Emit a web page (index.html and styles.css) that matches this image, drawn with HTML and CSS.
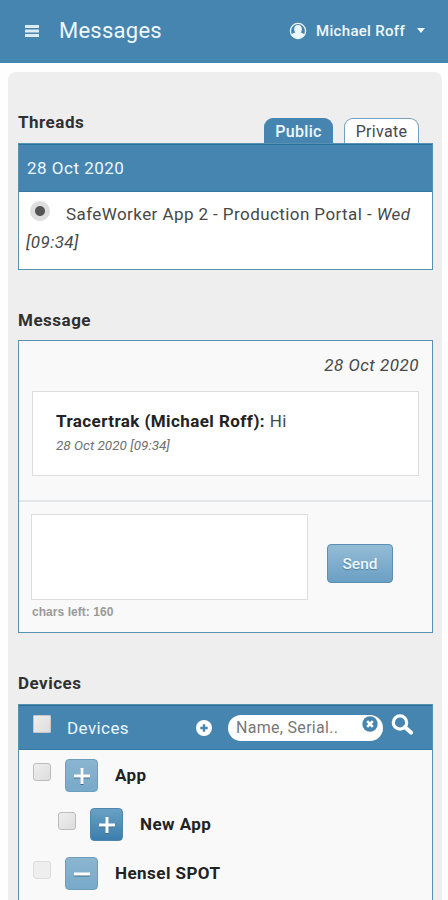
FILE: index.html
```html
<!DOCTYPE html>
<html lang="en">
<head>
<meta charset="utf-8">
<meta name="viewport" content="width=device-width, initial-scale=1">
<title>Messages</title>
<link rel="stylesheet" href="styles.css">
</head>
<body>
<header class="topbar">
  <svg class="menu-icon" viewBox="0 0 14 12" aria-hidden="true"><path d="M0 1.5h14M0 6h14M0 10.5h14"/></svg>
  <h1>Messages</h1>
  <div class="user">
    <svg class="user-icon" viewBox="0 0 18 18" aria-hidden="true"><circle cx="9" cy="9" r="7.600" fill="none" stroke="currentColor" stroke-width="1.300"/><ellipse cx="9" cy="7.200" rx="3.800" ry="4.200" fill="currentColor"/><path d="M2.400 12.800c1-1.600 2.800-2 4.400-2.600h4.400c1.600.6 3.400 1 4.400 2.600A8 8 0 0 1 2.400 12.800z" fill="currentColor"/></svg>
    <span>Michael Roff</span>
    <i class="caret"></i>
  </div>
</header>
<main class="panel">
  <section class="threads">
    <div class="section-head">
      <h2>Threads</h2>
      <nav class="tabs"><a class="tab active">Public</a><a class="tab">Private</a></nav>
    </div>
    <div class="box thread-box">
      <div class="thread-date">28 Oct 2020</div>
      <label class="thread"><span class="radio"></span><span class="thread-name">SafeWorker App 2 - Production Portal - <em>Wed</em></span><br><em>[09:34]</em></label>
    </div>
  </section>
  <section class="message">
    <h2>Message</h2>
    <div class="box message-box">
      <div class="log">
        <div class="log-date">28 Oct 2020</div>
        <article class="bubble">
          <p><strong>Tracertrak (Michael Roff):</strong> Hi</p>
          <time>28 Oct 2020 [09:34]</time>
        </article>
      </div>
      <form class="compose">
        <div>
          <textarea aria-label="Message"></textarea>
          <div class="chars">chars left: 160</div>
        </div>
        <button class="send" type="button">Send</button>
      </form>
    </div>
  </section>
  <section class="devices">
    <h2>Devices</h2>
    <div class="box device-box">
      <div class="device-head">
        <span class="check square"></span>
        <span class="device-title">Devices</span>
        <svg class="add-icon" viewBox="0 0 16 16" aria-hidden="true"><circle cx="8" cy="8" r="8" fill="#fff"/><path d="M8 4.300v7.400M4.300 8h7.400" stroke="#4785b1" stroke-width="2.400"/></svg>
        <div class="search">
          <span>Name, Serial..</span>
          <svg class="clear-icon" viewBox="0 0 16 16" aria-hidden="true"><circle cx="8" cy="8" r="7.700" fill="#4785b1"/><path d="M5.200 5.200l5.600 5.600M10.800 5.200l-5.600 5.600" stroke="#fff" stroke-width="2.500"/></svg>
        </div>
        <svg class="search-icon" viewBox="0 0 22 21" aria-hidden="true"><circle cx="9" cy="8.500" r="6.700" fill="none" stroke="#fff" stroke-width="3.200"/><path d="M14 13.200l6 5.400" stroke="#fff" stroke-width="4" stroke-linecap="round"/></svg>
      </div>
      <div class="device">
        <span class="check"></span>
        <span class="toggle"><svg viewBox="0 0 16 16" aria-hidden="true"><path d="M8 0v16M0 8h16"/></svg></span>
        <b>App</b>
      </div>
      <div class="device nested">
        <span class="check"></span>
        <span class="toggle dark"><svg viewBox="0 0 16 16" aria-hidden="true"><path d="M8 0v16M0 8h16"/></svg></span>
        <b>New App</b>
      </div>
      <div class="device">
        <span class="check faded"></span>
        <span class="toggle"><svg viewBox="0 0 16 16" aria-hidden="true"><path d="M0 8h16"/></svg></span>
        <b>Hensel SPOT</b>
      </div>
    </div>
  </section>
</main>
</body>
</html>
```
FILE: styles.css
```css
* { box-sizing: border-box; }
html, body { height: 100%; }
body {
  margin: 0;
  display: flex;
  flex-direction: column;
  overflow: hidden;
  background: #fefefe;
  color: #484848;
  font: 17px/28px Roboto, "Liberation Sans", sans-serif;
  letter-spacing: .42px;
}
h1, h2, p { margin: 0; }
.topbar {
  flex: none;
  height: 63px;
  padding: 0 23px 2px 25px;
  display: flex;
  align-items: center;
  background: #4785b1;
  color: #eef8fb;
}
.menu-icon { width: 14px; height: 12px; stroke: #dcecf3; stroke-width: 2.8; }
h1 { margin-left: 20px; font-size: 22px; font-weight: 400; letter-spacing: .25px; }
.user { margin-left: auto; display: flex; align-items: center; font-size: 15px; font-weight: 500; letter-spacing: .3px; }
.user-icon { width: 18px; height: 18px; margin-right: 9px; }
.caret { margin-left: 12px; border: 4.5px solid transparent; border-top: 5px solid #eef8fb; border-bottom: 0; }
.panel {
  flex: 1 0 auto;
  margin: 9px 6px 0 8px;
  padding: 0 9px 0 10px;
  background: #eee;
  border-radius: 8px 8px 0 0;
}
h2 { font-size: 17px; font-weight: 700; line-height: 28px; color: #303030; letter-spacing: .5px; }
.section-head { height: 71px; display: flex; align-items: flex-end; justify-content: space-between; }
.section-head h2 { margin-bottom: 7px; }
.tabs { display: flex; gap: 11px; margin-right: 14px; }
.tab {
  height: 25px;
  display: flex;
  justify-content: center;
  width: 75px;
  border: 1px solid #70a1be;
  border-bottom: 0;
  border-radius: 9px 9px 0 0;
  background: #fff;
  font-size: 16px;
  line-height: 26px;
  letter-spacing: .3px;
}
.tab.active { width: 69px; background: #4785b1; border-color: #4785b1; color: #eef8fb; font-weight: 500; }
.box { border: 1.5px solid #5b91b0; background: #f9f9f9; }
.thread-box { height: 127px; background: #fff; }
.thread-date {
  height: 48px;
  padding-left: 8px;
  border-top: 1px solid #27709b;
  border-bottom: 1px solid #357aa5;
  background: #4785b1;
  color: #eaf8fd;
  line-height: 46px;
  letter-spacing: .5px;
}
.thread { display: block; padding: 8px 0 0 7px; white-space: nowrap; }
.radio {
  display: inline-block;
  width: 20px;
  height: 20px;
  margin: 0 16px 0 4px;
  vertical-align: -1px;
  border: 1px solid #ddd;
  border-radius: 50%;
  background: radial-gradient(circle, #555 0 4.5px, #dedede 5.5px);
}
.message { padding-top: 36px; }
.message h2 { margin-bottom: 6px; }
.message-box { height: 293px; }
.log { height: 161px; padding: 10px 13px 0; border-bottom: 2px solid #e3e6e8; }
.log-date { text-align: right; font-style: italic; letter-spacing: .5px; }
.bubble { height: 85px; margin-top: 12px; padding: 15px 23px; border: 1px solid #ddd; background: #fff; }
.bubble p { white-space: nowrap; }
.bubble strong { color: #222; }
.bubble time { display: block; font-size: 13.5px; line-height: 20px; font-style: italic; color: #707070; letter-spacing: 0; }
.compose { display: flex; padding: 12px 0 0 12px; }
textarea { display: block; width: 277px; height: 86px; padding: 4px; border: 1px solid #ddd; background: #fff; resize: none; }
.chars { margin: 4px 0 0 1px; font: 700 12px/16px "Liberation Sans", sans-serif; color: #999; letter-spacing: .05px; }
.send {
  width: 66px;
  height: 39px;
  margin: 30px 0 0 19px;
  padding: 0;
  border: 1px solid #5b8eb0;
  border-radius: 4px;
  background: linear-gradient(#94bcd6, #6b9fc4);
  color: #eef8fb;
  font: 500 15.5px Roboto, sans-serif;
  text-shadow: 0 1px 1px #4c7b9c;
}
.devices { padding-top: 36px; }
.devices h2 { margin-bottom: 7px; }
.device-box { height: 220px; }
.device-head { height: 45px; display: flex; align-items: center; padding-left: 14px; background: #4785b1; border-top: 1px solid #27709b; border-bottom: 1px solid #357aa5; }
.check { flex: none; width: 18px; height: 18px; margin-bottom: 7px; border: 1px solid #bcbcbc; border-radius: 3px; background: linear-gradient(135deg, #eee, #ddd); }
.check.square { border-color: #c7c7c7; border-radius: 1px; }
.check.faded { border-color: #ddd; background: #eee; }
.device-title { width: 129px; margin-left: 16px; color: #eaf8fd; }
.add-icon { flex: none; width: 16px; height: 16px; }
.search { flex: none; width: 155px; height: 26px; margin-left: 16px; padding: 0 5px 0 8px; display: flex; justify-content: space-between; border-radius: 13px; background: #fff; color: #777; font-size: 16px; line-height: 26px; letter-spacing: .3px; white-space: nowrap; }
.clear-icon { width: 16px; height: 16px; margin-top: 1px; }
.search-icon { flex: none; width: 22px; height: 21px; margin: 0 0 7px 8px; }
.device { height: 49px; display: flex; align-items: center; padding-left: 14px; padding-top: 1px; }
.nested { padding-left: 39px; }
.toggle { flex: none; width: 33px; height: 33px; margin: 1px 17px 0 14px; display: grid; place-items: center; border: 1px solid #6c9ebd; border-radius: 4px; background: linear-gradient(#8bb5d0, #77a9c9); }
.toggle.dark { background: linear-gradient(#6aa0c4, #3b7eac); border-color: #4d87ae; }
.toggle svg { width: 16px; height: 16px; stroke: #fff; stroke-width: 3; filter: drop-shadow(0 1px 0 #426c88); }
.device b { color: #222; letter-spacing: .45px; }
```
